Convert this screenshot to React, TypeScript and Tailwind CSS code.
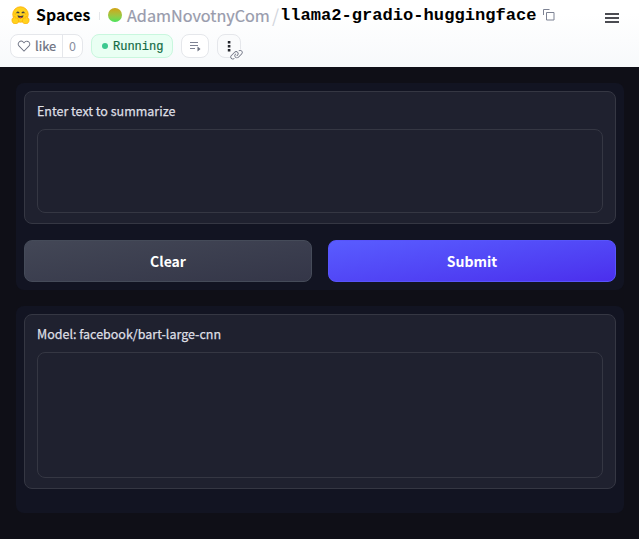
import React from 'react';

function HuggingFace() {
  return (
    <svg viewBox="0 0 38 36" className="mb-px h-[18px] w-[19px] shrink-0">
      <circle cx="19" cy="17" r="15.500" fill="#ffd21e" stroke="#ffac03" strokeWidth="1.600" />
      <path d="M12 13.500q1.500-2.500 3.500-.2M22.500 13.300q2-2.300 3.500.2" stroke="#3a3b45" strokeWidth="2.800" fill="none" strokeLinecap="round" />
      <path d="M13 18.500q6 2.500 12 0q-.5 6-6 6t-6-6z" fill="#3a3b45" />
      <path d="M16 23q3-2.300 6 0q-3 2.500-6 0z" fill="#f94040" />
      <circle cx="8.500" cy="16" r="1.500" fill="#ffac03" />
      <circle cx="29.500" cy="16" r="1.500" fill="#ffac03" />
      <path d="M2 26q0-2 3-1l1-4q2-2 3 1l1 3q2-3 3-1l2 4q2 5-3 7t-8-1q-3-3-2-8z" fill="#ffd21e" stroke="#ffac03" strokeWidth="1.300" />
      <path d="M36 26q0-2-3-1l-1-4q-2-2-3 1l-1 3q-2-3-3-1l-2 4q-2 5 3 7t8-1q3-3 2-8z" fill="#ffd21e" stroke="#ffac03" strokeWidth="1.300" />
    </svg>
  );
}

function Header() {
  return (
    <header className="h-[67px] bg-linear-to-b from-white from-20% to-[#f7f9fb]">
      <div className="flex h-[31px] items-center pl-[11px] pr-[20px]">
        <HuggingFace />
        <span className="mb-px ml-[6px] w-[54px] whitespace-nowrap text-[15.900px] font-bold leading-6 text-black">Spaces</span>
        <span className="ml-[9px] h-2 w-px bg-gray-200" />
        <span className="ml-2 mb-px size-[14px] rounded-full bg-linear-to-b from-[#d0a20d] to-[#3de35b]" />
        <span className="mb-px ml-[5px] w-[143px] whitespace-nowrap text-[16.200px] leading-6 text-[#989bac] [-webkit-text-stroke:0.2px_#989bac]">AdamNovotnyCom</span>
        <span className="mb-px ml-[2px] w-[8px] text-[18px] leading-6 text-gray-300">/</span>
        <span className="mt-px w-[257px] whitespace-nowrap font-['Liberation_Mono',monospace] text-[17.100px] font-bold leading-6 text-black">llama2-gradio-huggingface</span>
        <svg viewBox="0 0 12 12" className="mb-px ml-[6px] size-3" fill="none" stroke="#7d8293">
          <path d="M3.500 3.500h7.500v7.500h-7.500zM.5 6v-5.500h6" />
        </svg>
        <svg viewBox="0 0 14 10" className="ml-auto mt-[5px] h-[10px] w-[14px]" stroke="#4b4c52" strokeWidth="1.900">
          <path d="M0 1h14M0 5h14M0 9h14" />
        </svg>
      </div>
      <div className="flex items-start pl-[10px] pt-[3px]">
        <div className="flex h-6 w-[73px] items-center rounded-lg border border-gray-200 bg-white text-[#6b7080]">
          <svg viewBox="0 0 32 32" className="ml-[6px] size-[14px]" fill="#6b7080">
            <path d="M22.450 6a5.470 5.470 0 0 1 3.910 1.640 5.700 5.700 0 0 1 0 8L16 26.130 5.640 15.640a5.700 5.700 0 0 1 0-8 5.480 5.480 0 0 1 7.820 0L16 10.240l2.530-2.580A5.440 5.440 0 0 1 22.450 6m0-2a7.470 7.470 0 0 0-5.340 2.240L16 7.360l-1.110-1.120a7.490 7.490 0 0 0-10.680 0 7.720 7.720 0 0 0 0 10.820L16 29l11.790-11.940a7.720 7.720 0 0 0 0-10.820A7.490 7.490 0 0 0 22.450 4Z" />
          </svg>
          <span className="ml-1 w-[21px] whitespace-nowrap text-[12.900px] leading-5 [-webkit-text-stroke:0.2px_#6b7080]">like</span>
          <span className="ml-[6px] flex h-full flex-1 items-center justify-center border-l border-gray-200 text-[12.500px] leading-5 text-[#8b8fa0]">0</span>
        </div>
        <div className="ml-2 flex h-6 w-[82px] items-center rounded-lg border border-[#c9f7de] bg-[#e9fff3]">
          <span className="ml-[10px] size-[6px] rounded-full bg-[#3cc88f]" />
          <span className="ml-[5px] mt-[2px] whitespace-nowrap font-['Liberation_Mono',monospace] text-[12px] leading-5 text-[#126b45] [-webkit-text-stroke:0.2px_#126b45]">Running</span>
        </div>
        <div className="ml-2 flex h-6 w-7 items-center justify-center rounded-lg border border-gray-200 bg-white">
          <svg viewBox="0 0 12 12" className="size-3" fill="none" stroke="#7d8293">
            <path d="M1 2.500h8M1 5.500h8M1 8.500h5" />
            <path d="M8.500 6.500v5l3-2.500z" fill="#6b7080" stroke="none" />
          </svg>
        </div>
        <div className="relative ml-2 flex size-6 items-center justify-center rounded-lg border border-gray-200 bg-[#fafbfc]">
          <svg viewBox="0 0 4 12" className="h-3 w-1" fill="#25272d">
            <path d="M.8 1h2.600v2.400H.8zM.8 5h2.600v2.400H.8zM.8 9h2.600v2.400H.8z" />
          </svg>
          <span className="absolute left-[12px] top-[13px] size-[13px] rounded-full bg-[#fafbfc]">
            <svg viewBox="0 0 32 32" className="size-[13px]" fill="#6b7080">
              <path d="M29.250 6.760a6 6 0 0 0-8.500 0l1.420 1.420a4 4 0 1 1 5.670 5.670l-8 8a4 4 0 1 1-5.670-5.660l1.410-1.420-1.410-1.420-1.420 1.420a6 6 0 0 0 0 8.500A6 6 0 0 0 17 25a6 6 0 0 0 4.270-1.760l8-8a6 6 0 0 0-.02-8.480Z" />
              <path d="M4.190 24.820a4 4 0 0 1 0-5.670l8-8a4 4 0 0 1 5.670 0A3.940 3.940 0 0 1 19 14a4 4 0 0 1-1.170 2.850L15.710 19l1.420 1.420 2.120-2.120a6 6 0 0 0-8.510-8.510l-8 8a6 6 0 0 0 0 8.510A6 6 0 0 0 7 28a6.070 6.070 0 0 0 4.280-1.760l-1.420-1.420a4 4 0 0 1-5.670 0Z" />
            </svg>
          </span>
        </div>
      </div>
    </header>
  );
}

function TextField({ label, fieldClass }: { label: string; fieldClass: string }) {
  return (
    <label className="block rounded-lg border border-[#353743] bg-[#1f212f] px-3 pb-[10px] pt-[9px]">
      <span className="block whitespace-nowrap text-[12.500px] leading-5 text-[#dedfe4] [-webkit-text-stroke:0.25px_#dedfe4]">{label}</span>
      <textarea readOnly className={`mt-2 block w-full resize-none rounded-lg border border-[#353743] bg-[#1f212f] outline-none ${fieldClass}`} />
    </label>
  );
}

export default function App() {
  return (
    <div className="flex h-[539px] w-[639px] flex-col overflow-hidden bg-[#0f0f17] font-['Noto_Sans_CJK_SC',sans-serif]">
      <Header />
      <main className="flex flex-col gap-4 pl-4 pr-[15px] pt-4">
        <section className="flex h-[207px] flex-col gap-4 rounded-lg bg-[#121422] p-2">
          <TextField label="Enter text to summarize" fieldClass="h-[84px]" />
          <div className="grid grid-cols-2 gap-4">
            <button className="h-[42px] rounded-lg border border-[#454b59] bg-linear-to-br from-[#434756] to-[#343648] text-[14px] font-bold text-white">Clear</button>
            <button className="h-[42px] rounded-lg border border-[#5754fb] bg-linear-to-br from-[#595cff] to-[#4b2eed] text-[14px] font-bold text-white">Submit</button>
          </div>
        </section>
        <section className="h-[207px] rounded-lg bg-[#121422] p-2">
          <TextField label="Model: facebook/bart-large-cnn" fieldClass="h-[126px]" />
        </section>
      </main>
    </div>
  );
}
